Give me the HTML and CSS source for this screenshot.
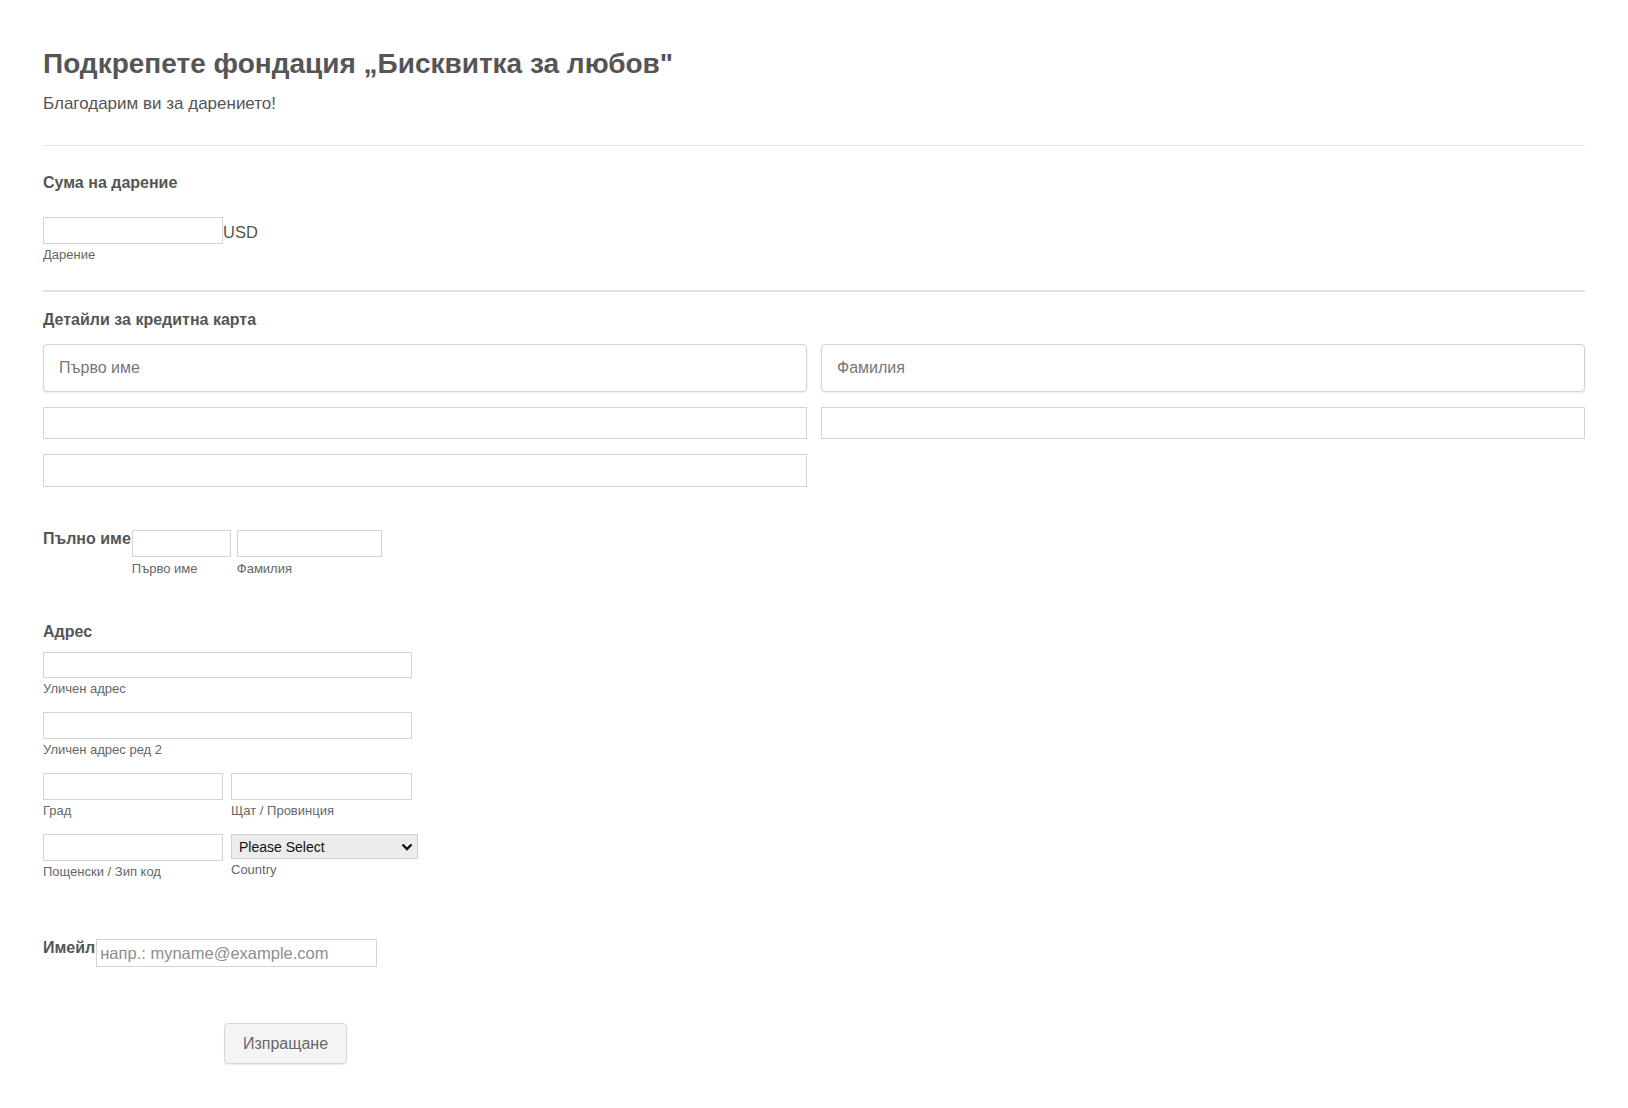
FILE: index.html
```html
<!DOCTYPE html>
<html lang="bg">
<head>
<meta charset="utf-8">
<title>Подкрепете фондация „Бисквитка за любов"</title>
<link rel="stylesheet" href="styles.css">
</head>
<body>
<form class="form">
  <h1 class="title">Подкрепете фондация „Бисквитка за любов"</h1>
  <p class="subtitle">Благодарим ви за дарението!</p>
  <hr class="rule rule-light">

  <div class="section donation">
    <div class="label">Сума на дарение</div>
    <div class="field-col">
      <div class="inline">
        <input class="box w180" type="text">
        <span class="currency">USD</span>
      </div>
      <span class="sub">Дарение</span>
    </div>
  </div>

  <hr class="rule rule-strong">

  <div class="section card">
    <div class="label">Детайли за кредитна карта</div>
    <div class="card-grid">
      <input class="rbox" type="text" placeholder="Първо име">
      <input class="rbox" type="text" placeholder="Фамилия">
      <input class="box tall" type="text">
      <input class="box tall" type="text">
      <input class="box tall t3" type="text">
    </div>
  </div>

  <div class="section fullname">
    <div class="label side">Пълно име</div>
    <div class="field-col">
      <input class="box w99" type="text">
      <span class="sub">Първо име</span>
    </div>
    <div class="field-col">
      <input class="box w145" type="text">
      <span class="sub">Фамилия</span>
    </div>
  </div>

  <div class="section address">
    <div class="label">Адрес</div>
    <div class="addr">
      <div class="field-col">
        <input class="box w369 h26" type="text">
        <span class="sub">Уличен адрес</span>
      </div>
      <div class="field-col">
        <input class="box w369" type="text">
        <span class="sub">Уличен адрес ред 2</span>
      </div>
      <div class="pair">
        <div class="field-col">
          <input class="box w180" type="text">
          <span class="sub">Град</span>
        </div>
        <div class="field-col">
          <input class="box w181" type="text">
          <span class="sub">Щат / Провинция</span>
        </div>
      </div>
      <div class="pair">
        <div class="field-col">
          <input class="box w180" type="text">
          <span class="sub">Пощенски / Зип код</span>
        </div>
        <div class="field-col">
          <div class="select-wrap">
            <select class="select">
              <option>Please Select</option>
            </select>
            <svg class="chev" width="12" height="8" viewBox="0 0 12 8"><path d="M1.5 1.5 L6 6 L10.5 1.5" fill="none" stroke="#111" stroke-width="2.4"/></svg>
          </div>
          <span class="sub sub-country">Country</span>
        </div>
      </div>
    </div>
  </div>

  <div class="section email">
    <div class="label side">Имейл</div>
    <input class="box w281 email-in" type="text" placeholder="напр.: myname@example.com">
  </div>

  <div class="actions">
    <button class="submit" type="button">Изпращане</button>
  </div>
</form>
</body>
</html>
```

FILE: styles.css
```css
* { box-sizing: border-box; }
body {
  margin: 0;
  background: #fff;
  font-family: "Liberation Sans", Arial, sans-serif;
  color: #555;
}
.form {
  padding: 48px 43px 40px 43px;
}
.title {
  margin: 0;
  font-size: 28px;
  line-height: 32px;
  font-weight: bold;
  color: #555;
}
.subtitle {
  margin: 14px 0 0 0;
  font-size: 17px;
  line-height: 20px;
  color: #555;
}
.rule {
  border: 0;
  margin: 0;
}
.rule-light {
  margin-top: 31px;
  height: 1px;
  background: #e8e8e8;
}
.rule-strong {
  margin-top: 28px;
  height: 2px;
  background: #e0e0e0;
}
.label {
  font-size: 16px;
  line-height: 20px;
  font-weight: bold;
  color: #555;
}
.field-col {
  display: flex;
  flex-direction: column;
  align-items: flex-start;
}
.inline {
  display: flex;
  align-items: center;
}
.box {
  height: 27px;
  border: 1px solid #d4d4d4;
  background: #fff;
  border-radius: 0;
  padding: 0 3px;
  font-family: "Liberation Sans", Arial, sans-serif;
  font-size: 16px;
  color: #555;
  outline: none;
}
.box::placeholder { color: #8e8e8e; }
.h26 { height: 26px; }
.w99 { width: 99px; }
.w145 { width: 145px; }
.w180 { width: 180px; }
.w181 { width: 181px; }
.w281 { width: 281px; }
.w369 { width: 369px; }
.currency {
  font-size: 16.5px;
  line-height: 20px;
  color: #555;
  margin-top: 3px;
}
.sub {
  margin-top: 4px;
  font-size: 13px;
  line-height: 14px;
  color: #666;
}
.donation { margin-top: 27px; }
.donation .field-col { margin-top: 24px; }

.card { margin-top: 18px; }
.card-grid {
  margin-top: 14px;
  display: grid;
  grid-template-columns: 1fr 1fr;
  column-gap: 14px;
  row-gap: 15px;
}
.rbox {
  height: 48px;
  border: 1px solid #d2d2d2;
  border-radius: 4px;
  box-shadow: 0 1px 2px rgba(0,0,0,0.08);
  padding: 0 15px;
  font-family: "Liberation Sans", Arial, sans-serif;
  font-size: 16px;
  color: #555;
  outline: none;
}
.rbox::placeholder { color: #777; }
.tall { height: 32px; width: 100%; }
.t3 { height: 33px; }

.fullname {
  margin-top: 43px;
  display: flex;
  align-items: flex-start;
  gap: 6px;
}
.fullname .label.side { margin-right: -5px; }
.side { margin-top: -1px; }
.fullname .sub { margin-top: 5px; }

.address { margin-top: 46px; }
.addr {
  margin-top: 10px;
  display: flex;
  flex-direction: column;
  gap: 16px;
}
.addr .sub { margin-top: 4px; }
.pair {
  display: flex;
  gap: 8px;
  align-items: flex-start;
}
.select-wrap {
  position: relative;
  width: 187px;
  height: 25px;
}
.select {
  appearance: none;
  -webkit-appearance: none;
  width: 187px;
  height: 25px;
  border: 1px solid #cfcfcf;
  background: #ececec;
  border-radius: 0;
  padding: 0 7px;
  font-family: "Liberation Sans", Arial, sans-serif;
  font-size: 14px;
  color: #111;
  outline: none;
}
.chev {
  position: absolute;
  right: 5px;
  top: 9px;
  pointer-events: none;
}
.sub-country { margin-top: 4px; }

.email {
  margin-top: 60px;
  display: flex;
  align-items: flex-start;
}
.email .label { margin-top: -1px; margin-right: 1px; }
.email-in { height: 28px; font-size: 16.5px; }

.actions {
  margin-top: 56px;
  padding-left: 181px;
}
.submit {
  width: 123px;
  height: 41px;
  border: 1px solid #d6d6d6;
  border-radius: 4px;
  background: #f4f4f4;
  box-shadow: 0 1px 1px rgba(0,0,0,0.08);
  font-family: "Liberation Sans", Arial, sans-serif;
  font-size: 16px;
  color: #666;
  cursor: pointer;
}
```
